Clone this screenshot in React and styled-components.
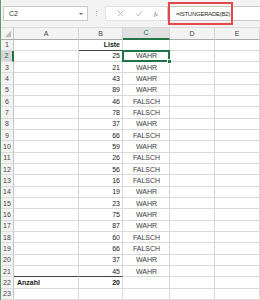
import React from 'react';
import styled, { createGlobalStyle, css } from 'styled-components';

const GREEN = '#217346';
const GRID = '#d9d9d9';

const GlobalStyle = createGlobalStyle`
  body {
    margin: 0;
    background: #ffffff;
    font-family: "Liberation Sans", Arial, sans-serif;
  }
`;

const Window = styled.div`
  width: 260px;
  height: 300px;
  overflow: hidden;
  box-sizing: border-box;
  border-left: 1px solid #5f9c70;
  background: #ffffff;
`;

const Toolbar = styled.div`
  height: 28px;
  display: flex;
  align-items: center;
  padding-left: 2px;
  background: #f3f3f3;
  box-sizing: border-box;
  border-bottom: 1px solid #dcdcdc;
`;

const NameBox = styled.div`
  width: 85px;
  height: 15px;
  box-sizing: border-box;
  border: 1px solid #c9c9c9;
  background: #ffffff;
  display: flex;
  align-items: center;
  justify-content: space-between;
  padding: 0 4px 0 5px;
  font-size: 7px;
  color: #333;
`;

const DropArrow = styled.span`
  width: 0;
  height: 0;
  border-left: 2px solid transparent;
  border-right: 2px solid transparent;
  border-top: 2px solid #666;
`;

const Grip = styled.div`
  width: 17px;
  display: flex;
  flex-direction: column;
  align-items: center;
  gap: 1px;
`;

const GripDot = styled.span`
  width: 1px;
  height: 1px;
  background: #b5b5b5;
`;

const ButtonBox = styled.div`
  width: 62px;
  height: 15px;
  box-sizing: border-box;
  background: #ffffff;
  border: 1px solid #e2e2e2;
  border-right: none;
  display: flex;
  align-items: center;
  justify-content: space-around;
  padding: 0 4px 0 6px;
`;

const Fx = styled.span`
  font-family: "Liberation Serif", serif;
  font-style: italic;
  font-size: 7px;
  color: #666;
  letter-spacing: -0.3px;
  & small {
    font-size: 5px;
  }
`;

const FormulaWrap = styled.div`
  position: relative;
  flex: 1;
  height: 15px;
  box-sizing: border-box;
  background: #ffffff;
  border: 1px solid #c9c9c9;
  border-right: none;
  display: flex;
  align-items: center;
  padding-left: 8px;
`;

const FormulaText = styled.span`
  font-size: 6px;
  color: #2a2a2a;
  letter-spacing: -0.25px;
  white-space: nowrap;
`;

const Highlight = styled.div`
  position: absolute;
  left: 0;
  top: -5px;
  width: 65px;
  height: 23px;
  box-sizing: border-box;
  border: 2px solid #e3474a;
`;

const Sheet = styled.div`
  display: grid;
  grid-template-columns: 13px 65px 44px 47px 45px 45px;
  grid-template-rows: 11.5px;
  grid-auto-rows: 11.33px;
`;

const headBase = css`
  box-sizing: border-box;
  display: flex;
  align-items: center;
  justify-content: center;
  font-size: 7px;
  color: #444;
  background: #f3f3f3;
`;

const Corner = styled.div`
  ${headBase};
  justify-content: flex-end;
  align-items: flex-end;
  padding: 0 2px 2px 0;
  border-right: 1px solid #c6c6c6;
  border-bottom: 1px solid #ababab;
`;

const ColHead = styled.div`
  ${headBase};
  border-right: 1px solid #d4d4d4;
  border-bottom: 1px solid #ababab;
  ${p => p.$active && css`
    background: #e1e1e1;
    color: ${GREEN};
    border-bottom: 2px solid ${GREEN};
  `}
`;

const RowHead = styled.div`
  ${headBase};
  border-right: 1px solid #c6c6c6;
  border-bottom: 1px solid #dcdcdc;
  ${p => p.$active && css`
    background: #d8d8d8;
    color: ${GREEN};
    border-right: 2px solid ${GREEN};
  `}
`;

const Cell = styled.div`
  box-sizing: border-box;
  display: flex;
  align-items: center;
  justify-content: ${p => p.$align || 'flex-start'};
  padding: 0 2px 0 3px;
  font-size: 7px;
  font-weight: ${p => (p.$bold ? 700 : 400)};
  color: ${p => (p.$soft ? '#3a3a3a' : '#1a1a1a')};
  white-space: nowrap;
  border-right: 1px solid ${GRID};
  border-bottom: 1px solid ${p => (p.$rule ? '#444' : GRID)};
  ${p => p.$selected && css`
    position: relative;
    &::after {
      content: '';
      position: absolute;
      left: -1px;
      top: -1px;
      right: -1px;
      bottom: -1px;
      border: 2px solid ${GREEN};
    }
    &::before {
      content: '';
      position: absolute;
      right: -3px;
      bottom: -3px;
      width: 3px;
      height: 3px;
      background: ${GREEN};
      border: 1px solid #fff;
      z-index: 2;
    }
  `}
`;

const data = [
  [25, 'WAHR'], [21, 'WAHR'], [43, 'WAHR'], [89, 'WAHR'], [46, 'FALSCH'],
  [78, 'FALSCH'], [37, 'WAHR'], [66, 'FALSCH'], [59, 'WAHR'], [26, 'FALSCH'],
  [56, 'FALSCH'], [16, 'FALSCH'], [19, 'WAHR'], [23, 'WAHR'], [75, 'WAHR'],
  [87, 'WAHR'], [60, 'FALSCH'], [66, 'FALSCH'], [37, 'WAHR'], [45, 'WAHR'],
];

const Cross = () => (
  <svg width="7" height="7" viewBox="0 0 7 7">
    <path d="M1 1 L6 6 M6 1 L1 6" stroke="#b3b3b3" strokeWidth="0.9" fill="none" />
  </svg>
);

const Check = () => (
  <svg width="8" height="7" viewBox="0 0 8 7">
    <path d="M1 3.8 L3 5.8 L7 1" stroke="#b3b3b3" strokeWidth="0.9" fill="none" />
  </svg>
);

const CornerMark = () => (
  <svg width="6" height="6" viewBox="0 0 6 6">
    <path d="M6 0 L6 6 L0 6 Z" fill="#b8b8b8" />
  </svg>
);

const App = () => {
  const rows = [];
  rows.push(
    <React.Fragment key="r1">
      <RowHead>1</RowHead>
      <Cell />
      <Cell $align="flex-end" $bold $rule>Liste</Cell>
      <Cell />
      <Cell />
      <Cell />
    </React.Fragment>
  );
  data.forEach(([num, res], i) => {
    const r = i + 2;
    rows.push(
      <React.Fragment key={r}>
        <RowHead $active={r === 2}>{r}</RowHead>
        <Cell $rule={r === 21} />
        <Cell $align="flex-end" $rule={r === 21}>{num}</Cell>
        <Cell $align="center" $soft $selected={r === 2}>{res}</Cell>
        <Cell />
        <Cell />
      </React.Fragment>
    );
  });
  rows.push(
    <React.Fragment key="r22">
      <RowHead>22</RowHead>
      <Cell $bold>Anzahl</Cell>
      <Cell $align="flex-end" $bold>20</Cell>
      <Cell />
      <Cell />
      <Cell />
    </React.Fragment>
  );
  rows.push(
    <React.Fragment key="r23">
      <RowHead>23</RowHead>
      <Cell />
      <Cell />
      <Cell />
      <Cell />
      <Cell />
    </React.Fragment>
  );

  return (
    <Window>
      <GlobalStyle />
      <Toolbar>
        <NameBox>
          <span>C2</span>
          <DropArrow />
        </NameBox>
        <Grip>
          <GripDot />
          <GripDot />
          <GripDot />
        </Grip>
        <ButtonBox>
          <Cross />
          <Check />
          <Fx>f<small>x</small></Fx>
        </ButtonBox>
        <FormulaWrap>
          <FormulaText>=ISTUNGERADE(B2)</FormulaText>
          <Highlight />
        </FormulaWrap>
      </Toolbar>
      <Sheet>
        <Corner><CornerMark /></Corner>
        <ColHead>A</ColHead>
        <ColHead>B</ColHead>
        <ColHead $active>C</ColHead>
        <ColHead>D</ColHead>
        <ColHead>E</ColHead>
        {rows}
      </Sheet>
    </Window>
  );
};

export default App;
